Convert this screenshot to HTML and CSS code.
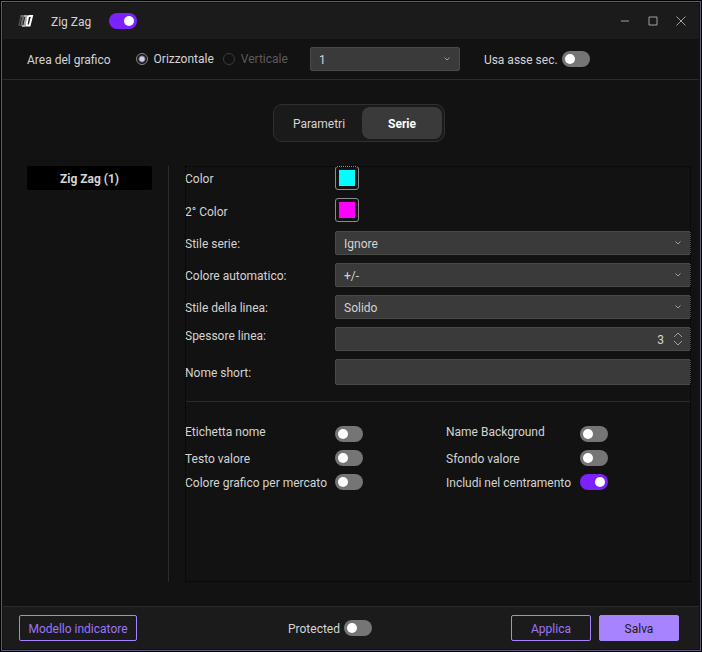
FILE: index.html
```html
<!DOCTYPE html>
<html lang="it">
  <head>
    <meta charset="UTF-8" />
    <meta name="viewport" content="width=device-width, initial-scale=1.0" />
    <title>Zig Zag</title>
    <link rel="stylesheet" href="styles.css">
  </head>
  <body>
    <div class="window">
      <header class="titlebar">
        <svg class="logo" width="16" height="12" viewBox="0 0 16 12">
          <path d="M3 1.5 L0.8 11" stroke="#4a4a4a" stroke-width="1.5" fill="none" />
          <path d="M2.5 1 H5.5 L3.2 11" stroke="#6a6a6a" stroke-width="2" fill="none" />
          <path d="M6 1 H8.5 L6.2 11 H4" stroke="#a8a8a8" stroke-width="2" fill="none" />
          <path d="M10.2 0.8 L8.4 10.6 H11.6 L14 1 H10.5" stroke="#fff" stroke-width="2" fill="none" />
        </svg>
        <label class="title" for="enabled">Zig Zag</label>
        <input type="checkbox" class="switch" id="enabled" checked />
        <div class="window-buttons">
          <button aria-label="Riduci">
            <svg width="10" height="10" viewBox="0 0 10 10"><path d="M1 5 H9" /></svg>
          </button>
          <button aria-label="Ingrandisci">
            <svg width="10" height="10" viewBox="0 0 10 10"><path d="M1 1 H9 V9 H1 Z" /></svg>
          </button>
          <button aria-label="Chiudi">
            <svg width="10" height="10" viewBox="0 0 10 10"><path d="M0.5 0.5 L9.5 9.5 M9.5 0.5 L0.5 9.5" /></svg>
          </button>
        </div>
      </header>

      <div class="toolbar">
        <span class="area-label">Area del grafico</span>
        <label class="radio"><input type="radio" name="area" checked />Orizzontale</label>
        <label class="radio disabled"><input type="radio" name="area" disabled />Verticale</label>
        <div class="select area-select">
          <select aria-label="Area"><option>1</option></select>
          <svg width="6" height="4" viewBox="0 0 6 4"><path d="M0.5 0.5 L3 3 L5.5 0.5" /></svg>
        </div>
        <label for="sec-axis">Usa asse sec.</label>
        <input type="checkbox" class="switch" id="sec-axis" />
      </div>

      <main>
        <nav class="tabs">
          <button>Parametri</button>
          <button class="active">Serie</button>
        </nav>
        <div class="content">
          <aside>
            <button class="series">Zig Zag (1)</button>
          </aside>
          <section class="panel">
            <div class="form">
              <label for="color1">Color</label>
              <input type="color" id="color1" value="#00ffff" />
              <label for="color2">2° Color</label>
              <input type="color" id="color2" value="#ff00ff" />
              <label for="style">Stile serie:</label>
              <div class="select">
                <select id="style"><option>Ignore</option></select>
                <svg width="6" height="4" viewBox="0 0 6 4"><path d="M0.5 0.5 L3 3 L5.5 0.5" /></svg>
              </div>
              <label for="auto-color">Colore automatico:</label>
              <div class="select">
                <select id="auto-color"><option>+/-</option></select>
                <svg width="6" height="4" viewBox="0 0 6 4"><path d="M0.5 0.5 L3 3 L5.5 0.5" /></svg>
              </div>
              <label for="line-style">Stile della linea:</label>
              <div class="select">
                <select id="line-style"><option>Solido</option></select>
                <svg width="6" height="4" viewBox="0 0 6 4"><path d="M0.5 0.5 L3 3 L5.5 0.5" /></svg>
              </div>
              <label class="top" for="line-width">Spessore linea:</label>
              <div class="spinner">
                <input type="text" inputmode="numeric" id="line-width" value="3" />
                <svg width="10" height="14" viewBox="0 0 10 14"><path d="M1 5 L5 1 L9 5 M1 9 L5 13 L9 9" /></svg>
              </div>
              <label for="short-name">Nome short:</label>
              <input type="text" class="text" id="short-name" />
            </div>
            <hr />
            <div class="options">
              <label for="name-label">Etichetta nome</label>
              <input type="checkbox" class="switch" id="name-label" />
              <label for="name-bg">Name Background</label>
              <input type="checkbox" class="switch" id="name-bg" />
              <label for="value-text">Testo valore</label>
              <input type="checkbox" class="switch" id="value-text" />
              <label for="value-bg">Sfondo valore</label>
              <input type="checkbox" class="switch" id="value-bg" />
              <label for="market-color">Colore grafico per mercato</label>
              <input type="checkbox" class="switch" id="market-color" />
              <label for="centering">Includi nel centramento</label>
              <input type="checkbox" class="switch" id="centering" checked />
            </div>
          </section>
        </div>
      </main>

      <footer>
        <button class="btn template">Modello indicatore</button>
        <div class="protected">
          <label for="protected">Protected</label>
          <input type="checkbox" class="switch" id="protected" />
        </div>
        <button class="btn">Applica</button>
        <button class="btn primary">Salva</button>
      </footer>
    </div>
  </body>
</html>
```
FILE: styles.css
```css
* {
  box-sizing: border-box;
}
body {
  margin: 0;
  padding: 1px;
  background-color: #000;
  color: #d4d4d4;
  font-family: Roboto, "Open Sans", sans-serif;
  font-size: 12px;
  line-height: 16px;
}
button,
input,
select {
  margin: 0;
  font: inherit;
  color: inherit;
}
label {
  white-space: nowrap;
}
.window {
  display: flex;
  flex-direction: column;
  min-height: calc(100vh - 2px);
  padding: 1px;
  border: 1px solid #62567d;
  background-color: #121212;
}

/* title bar */
.titlebar {
  display: flex;
  align-items: center;
  height: 36px;
  padding: 0 4px 0 15px;
  background-color: #1b1b1b;
}
.title {
  margin: 0 18px 0 17px;
}
.title,
.area-label,
.toolbar > label[for],
.form label,
.protected label {
  padding-top: 2px;
}
.window-buttons {
  display: flex;
  margin-left: auto;
}
.window-buttons button {
  display: grid;
  place-items: center;
  width: 28px;
  height: 24px;
  padding: 0;
  border: none;
  background: none;
}
.window-buttons path {
  fill: none;
  stroke: #a0a0a0;
}

/* switches */
.switch {
  appearance: none;
  display: flex;
  align-items: center;
  flex: none;
  width: 28px;
  height: 16px;
  padding: 0 3px;
  border-radius: 8px;
  background-color: #757575;
}
.switch::before {
  content: "";
  width: 10px;
  height: 10px;
  border-radius: 50%;
  background-color: #fff;
}
.switch:checked {
  justify-content: flex-end;
  background-color: #7c22ff;
}

/* toolbar */
.toolbar {
  display: flex;
  align-items: center;
  height: 41px;
  padding: 0 24px;
  border-bottom: 1px solid #2b2b2b;
}
.area-label {
  margin-right: 25px;
}
.radio {
  display: flex;
  align-items: center;
  gap: 6px;
  margin-right: 9px;
}
.radio input {
  appearance: none;
  width: 12px;
  height: 12px;
  border: 1px solid #8a8a8a;
  border-radius: 50%;
}
.radio input:checked {
  background: radial-gradient(circle, #d6ccee 0 2px, transparent 4px);
}
.radio.disabled {
  margin-right: 22px;
  color: #5f5a5a;
}
.radio.disabled input {
  border-color: #3c3c3c;
}
.area-select {
  width: 150px;
  margin-right: 24px;
}
.toolbar .switch {
  margin-left: 4px;
}

/* fields */
.select,
.spinner {
  display: grid;
  align-items: center;
}
.select > *,
.spinner > * {
  grid-area: 1 / 1;
}
.select svg,
.spinner svg {
  justify-self: end;
  margin-right: 10px;
  fill: none;
  stroke: #a0a0a0;
  pointer-events: none;
}
.spinner svg {
  margin-right: 8px;
}
select,
.spinner input,
.text {
  appearance: none;
  width: 100%;
  height: 24px;
  padding: 2px 8px 0;
  border: 1px solid #4a4a4a;
  border-radius: 2px;
  background-color: #3a3a3a;
}
.spinner input {
  padding-right: 26px;
  text-align: right;
}
.form .text {
  height: 26px;
}
input[type="color"] {
  appearance: none;
  align-self: start;
  width: 24px;
  height: 24px;
  padding: 3px;
  border: 1px solid #8c8c8c;
  border-radius: 3px;
  background: none;
}
input[type="color"]::-webkit-color-swatch-wrapper {
  padding: 0;
}
input[type="color"]::-webkit-color-swatch {
  border: none;
}

/* main */
main {
  display: flex;
  flex: 1;
  flex-direction: column;
  gap: 24px;
  padding: 24px 8px 24px 24px;
}
.tabs {
  display: flex;
  align-self: center;
  padding: 2px;
  border: 1px solid #303030;
  border-radius: 9px;
  background-color: #1a1a1a;
}
.tabs button {
  width: 80px;
  height: 32px;
  padding: 2px 0 0;
  border: none;
  border-radius: 8px;
  background: none;
}
.tabs button:first-child {
  width: 86px;
}
.tabs .active {
  background-color: #3a3a3a;
  color: #fff;
  font-weight: bold;
}
.content {
  display: flex;
  flex: 1;
}
aside {
  width: 142px;
  padding-right: 16px;
  border-right: 1px solid #2b2b2b;
}
.series {
  width: 100%;
  height: 24px;
  padding: 2px 0 0;
  border: none;
  border-radius: 2px;
  background-color: #000;
  font-weight: bold;
}
.panel {
  flex: 1;
  margin-left: 16px;
  outline: 1px dotted #000;
  outline-offset: -1px;
}
.form {
  display: grid;
  grid-template-columns: 150px 1fr;
  grid-template-rows: 24px 25px repeat(4, 24px) 26px;
  row-gap: 8px;
  align-items: center;
}
.form .top {
  align-self: start;
  padding-top: 1px;
}
hr {
  height: 1px;
  margin: 16px 0 21px;
  border: none;
  background-color: #2b2b2b;
}
.options {
  display: grid;
  grid-template-columns: 150px 111px 134px 1fr;
  grid-template-rows: 19px 16px 16px;
  row-gap: 8px;
}
.options label {
  padding-top: 1px;
}
.options .switch {
  align-self: end;
}

/* footer */
footer {
  display: flex;
  align-items: center;
  gap: 8px;
  height: 43px;
  padding: 0 20px 0 16px;
  border-top: 1px solid #2b2b2b;
  background-color: #1b1b1b;
}
.protected {
  display: flex;
  align-items: center;
  gap: 4px;
  margin: 0 auto;
  padding-left: 12px;
}
.btn {
  width: 80px;
  height: 26px;
  padding: 2px 0 0;
  border: 1px solid #a783ff;
  border-radius: 2px;
  background: none;
  color: #9b75f5;
}
.template {
  width: 118px;
}
.primary {
  background-color: #a783ff;
  color: #1b1b1b;
}
```
